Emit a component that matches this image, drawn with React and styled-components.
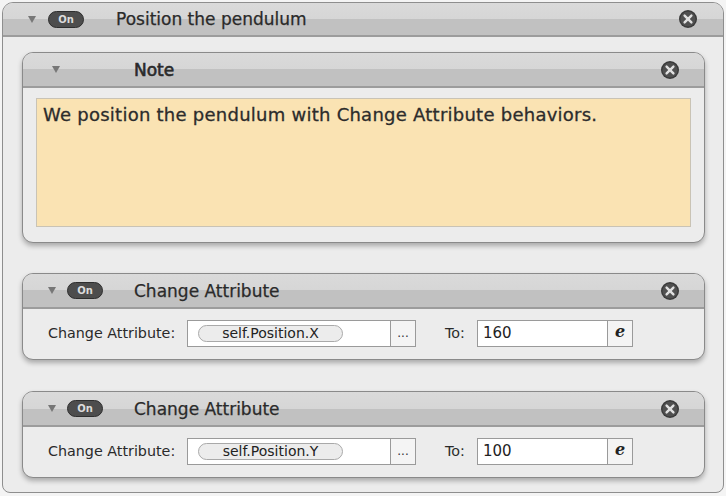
import React from 'react';
import styled, { createGlobalStyle } from 'styled-components';

const GlobalStyle = createGlobalStyle`
  html, body {
    margin: 0;
    padding: 0;
    background: #f4f4f4;
  }
  body {
    font-family: "DejaVu Sans", "Liberation Sans", sans-serif;
    color: #222;
  }
`;

const Outer = styled.div`
  width: 722px;
  height: 491px;
  margin: 2px 2px;
  box-sizing: border-box;
  border: 1px solid #8e8e8e;
  border-radius: 11px 11px 8px 8px;
  background: #ececec;
  overflow: hidden;
  display: flex;
  flex-direction: column;
`;

const Header = styled.div`
  height: ${p => p.$h}px;
  flex: none;
  box-sizing: border-box;
  display: flex;
  align-items: center;
  padding-left: ${p => p.$pl}px;
  padding-right: ${p => p.$pr}px;
  background: linear-gradient(to bottom, #dadada 0, #d6d6d6 50%, #c1c1c1 50%, #c1c1c1 100%);
  border-bottom: 2px solid #9c9c9c;
`;

const Triangle = styled.span`
  width: 0;
  height: 0;
  border-left: 4px solid transparent;
  border-right: 4px solid transparent;
  border-top: 7px solid #777;
  margin-right: ${p => p.$gap}px;
  flex: none;
`;

const OnPill = styled.span`
  flex: none;
  width: 36px;
  height: 17px;
  border-radius: 9px;
  background: #4d4d4d;
  border: 1px solid #2e2e2e;
  box-sizing: border-box;
  color: #dcdcdc;
  font-size: 10px;
  font-weight: bold;
  display: flex;
  align-items: center;
  justify-content: center;
  margin-right: ${p => p.$gap}px;
`;

const Title = styled.span`
  flex: 1;
  font-size: 17px;
  color: #2a2a2a;
  -webkit-text-stroke: ${p => (p.$strong ? 0.6 : 0.25)}px #2a2a2a;
`;

const CloseWrap = styled.span`
  flex: none;
  width: 20px;
  height: 20px;
  display: flex;
`;

const Body = styled.div`
  flex: 1;
  display: flex;
  flex-direction: column;
  padding: 15px 18px 0 19px;
`;

const Panel = styled.div`
  box-sizing: border-box;
  height: ${p => p.$h}px;
  margin-bottom: ${p => p.$mb}px;
  border: 1px solid #8a8a8a;
  border-radius: 11px;
  background: #ececec;
  box-shadow: 0 3px 5px rgba(0, 0, 0, 0.28);
  overflow: hidden;
  display: flex;
  flex-direction: column;
`;

const NoteArea = styled.div`
  margin: 10px 13px 15px 13px;
  flex: 1;
  background: #fae3b3;
  border: 1px solid #c9c3b5;
  padding: 5px 6px 3px;
  font-size: 18px;
  letter-spacing: 0.25px;
  color: #2c2c2c;
  -webkit-text-stroke: 0.3px #2c2c2c;
`;

const Row = styled.div`
  flex: 1;
  display: flex;
  align-items: center;
  padding-left: 25px;
  padding-bottom: 2px;
`;

const Label = styled.span`
  font-size: 14.3px;
  color: #2a2a2a;
  width: ${p => p.$w}px;
  flex: none;
`;

const Field = styled.div`
  display: flex;
  height: 27px;
  box-sizing: border-box;
  border: 1px solid #9a9a9a;
  background: #fff;
  margin-right: ${p => p.$mr || 0}px;
`;

const FieldMain = styled.div`
  width: ${p => p.$w}px;
  display: flex;
  align-items: center;
  padding-left: ${p => p.$pl}px;
  box-sizing: border-box;
  font-size: 15px;
  color: #222;
`;

const AttrPill = styled.span`
  width: 145px;
  height: 17px;
  box-sizing: border-box;
  border: 1px solid #a9a9a9;
  border-radius: 9px;
  background: #ececec;
  font-size: 14px;
  color: #222;
  display: flex;
  align-items: center;
  justify-content: center;
`;

const FieldButton = styled.span`
  width: 25px;
  border-left: 1px solid #9a9a9a;
  background: #f4f4f4;
  display: flex;
  align-items: center;
  justify-content: center;
  font-size: 12px;
  color: #333;
  box-sizing: border-box;
`;

const ExprE = styled.span`
  font-family: "DejaVu Serif", "Liberation Serif", serif;
  font-style: italic;
  font-weight: bold;
  font-size: 16px;
  color: #222;
  line-height: 1;
  margin-top: -2px;
`;

function CloseIcon() {
  return (
    <svg width="20" height="20" viewBox="0 0 20 20">
      <circle cx="10" cy="10" r="9" fill="#3a3a3a" />
      <circle cx="10" cy="10" r="7.6" fill="#505050" />
      <path d="M6.6 6.6 L13.4 13.4 M13.4 6.6 L6.6 13.4" stroke="#e0e0e0" strokeWidth="2.4" strokeLinecap="round" />
    </svg>
  );
}

function ChangeAttribute({ attr, value, mb }) {
  return (
    <Panel $h={87} $mb={mb}>
      <Header $h={35} $pl={25} $pr={24}>
        <Triangle $gap={11} />
        <OnPill $gap={31}>On</OnPill>
        <Title>Change Attribute</Title>
        <CloseWrap><CloseIcon /></CloseWrap>
      </Header>
      <Row>
        <Label $w={139}>Change Attribute:</Label>
        <Field $mr={29}>
          <FieldMain $w={202} $pl={10}>
            <AttrPill>{attr}</AttrPill>
          </FieldMain>
          <FieldButton>...</FieldButton>
        </Field>
        <Label $w={32}>To:</Label>
        <Field>
          <FieldMain $w={129} $pl={5}>{value}</FieldMain>
          <FieldButton><ExprE>e</ExprE></FieldButton>
        </Field>
      </Row>
    </Panel>
  );
}

export default function App() {
  return (
    <>
      <GlobalStyle />
      <Outer>
        <Header $h={34} $pl={25} $pr={25}>
          <Triangle $gap={12} />
          <OnPill $gap={32}>On</OnPill>
          <Title>Position the pendulum</Title>
          <CloseWrap><CloseIcon /></CloseWrap>
        </Header>
        <Body>
          <Panel $h={191} $mb={30}>
            <Header $h={35} $pl={29} $pr={24}>
              <Triangle $gap={74} />
              <Title $strong>Note</Title>
              <CloseWrap><CloseIcon /></CloseWrap>
            </Header>
            <NoteArea>We position the pendulum with Change Attribute behaviors.</NoteArea>
          </Panel>
          <ChangeAttribute attr="self.Position.X" value="160" mb={31} />
          <ChangeAttribute attr="self.Position.Y" value="100" mb={0} />
        </Body>
      </Outer>
    </>
  );
}
